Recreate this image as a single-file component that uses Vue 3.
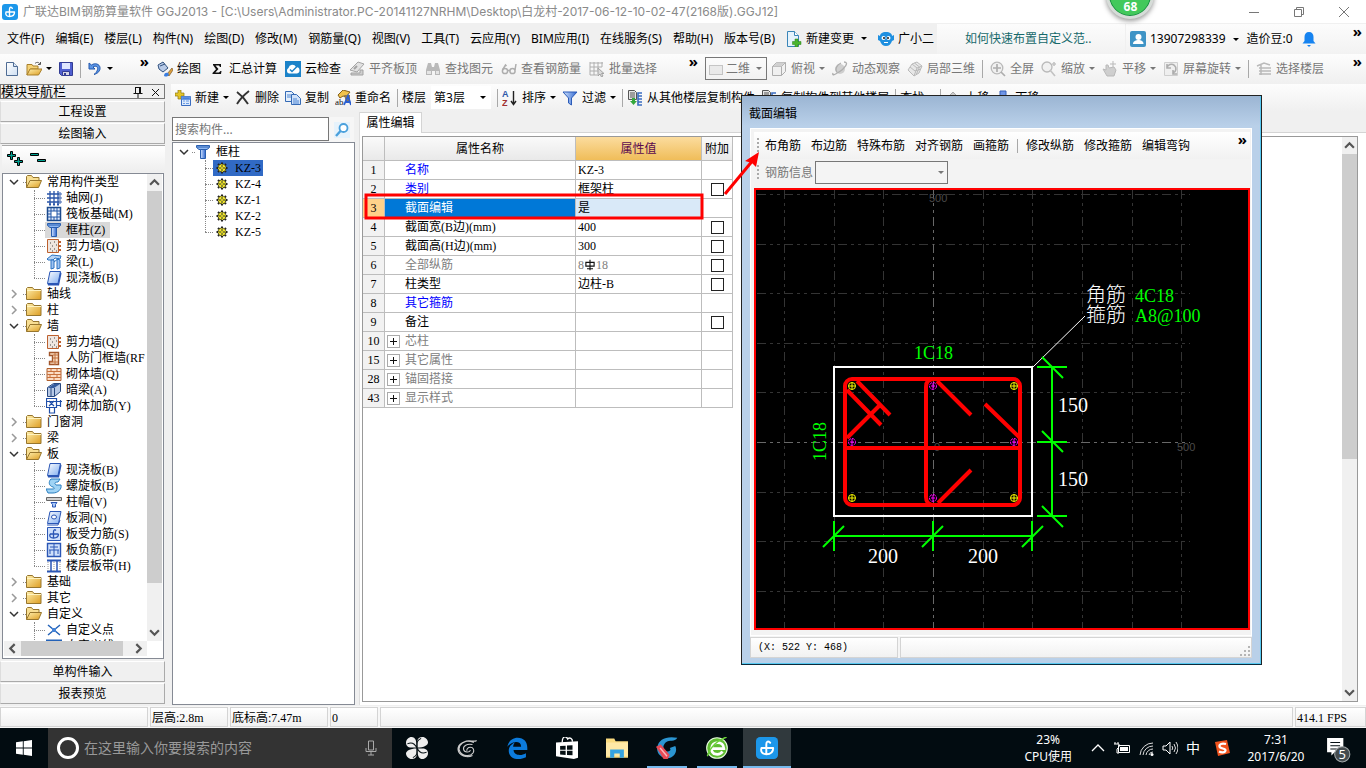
<script setup>
import { h } from 'vue'

const icons = {
  app: '<rect width="16" height="16" rx="3" fill="#1c97ea"/><path d="M10.300 4.200C8.500 2.500 7.500 3.500 7.500 5.500V12.500M4 8h8.500M4 8c-1 3 1 4.500 3.500 4.500 3 0 5-1.500 5-4.500" fill="none" stroke="#fff" stroke-width="1.400" stroke-linecap="round"/>',
  doc: '<path d="M2.500 1.500h7l4 4v9h-11z" fill="url(#gPaper)" stroke="#4f6c94"/><path d="M9.500 1.500v4h4" fill="#dce8f6" stroke="#4f6c94"/>',
  open: '<path d="M1 14V3.500h5l1 1.500h5v3H4.500z" fill="#f5d276" stroke="#a9802b"/><path d="M1 14l3-6h12l-3.500 6z" fill="url(#gFold)" stroke="#a9802b"/><path d="M9 2.500c2-2 4-1 5 .5m.5-2v2.500H12" fill="none" stroke="#555"/>',
  save: '<path d="M1.500 1.500h13v13h-11l-2-2z" fill="#4f5fd0" stroke="#323c93"/><path d="M4 2h8v6H4z" fill="#dfe6ff"/><path d="M4.500 10.500h7v4h-7z" fill="#d5d5e5" stroke="#323c93"/><path d="M6 12h2v2H6z" fill="#323c93"/>',
  undo: '<path d="M2 2v6h6L6 6c3-2 6 0 4 4-.5 1.200-1.500 2.400-3 3.500 4-1 6.500-4 6-7C12.500 3 8 1.500 4.500 4z" fill="#5b95e5" stroke="#2559ad"/>',
  paint: '<path d="M1 4l5-3 5 6-5 4-4-3z" fill="#b9cbe8" stroke="#32527f"/><path d="M3 5l5-2" stroke="#32527f"/><path d="M15 7l-5 6 2 2 4-6z" fill="#e0a13c" stroke="#795728" stroke-width=".7"/><path d="M7 15c0-3 2-4 4-3l1 1c-1 3-3 3-5 2z" fill="#3a7de0"/>',
  sigma: '<path d="M4 3h8v3h-1l-1-1.500H6.500L9.500 8l-3.200 3.500H10L11.500 10h1l-.5 3H3.500v-1L7 8.200 4 4z" fill="#111"/>',
  cloud: '<rect width="16" height="16" fill="#1c83c9"/><path d="M4 12.500a3 3 0 0 1-.5-5.500A4 4 0 0 1 11 6a3.300 3.300 0 0 1 1 6.500z" fill="#fff"/><path d="M5 8.500l2 2 5-5" stroke="#1c83c9" stroke-width="1.500" fill="none"/>',
  slab: '<path d="M1 9l8-8 6 2-7 8z" fill="#d7d7d7" stroke="#777"/><path d="M2 14h12V9h-3v3H2z" fill="#bbb" stroke="#777"/><path d="M5 8l3-3" stroke="#777" stroke-width="2"/>',
  bino: '<path d="M1 9l2-7h3l1 4h2l1-4h3l2 7v5h-5v-4H7v4H1z" fill="#999"/><path d="M2 10h4v3H2zm9 0h3v3h-3z" fill="#ddd"/>',
  glasses: '<g fill="none" stroke="#888" stroke-width="1.500"><circle cx="4" cy="10" r="2.600"/><circle cx="11.500" cy="10" r="2.600"/><path d="M6.500 9.500h2.500M1.500 9l3-5 1 1M14 9l1-6"/></g>',
  batch: '<path d="M1 1v13M5 1v13M9 1v8M13 1v5M1 2h13M1 6h12M1 10h8M1 14h7" stroke="#888" fill="none"/><path d="M9 7v8l2-2 1.500 3 1.500-1-1.500-2.500H15z" fill="#ccc" stroke="#777"/>',
  box: '<rect x="1.500" y="4.500" width="13" height="9" fill="#e4e4e4" stroke="#aaa"/>',
  cube: '<path d="M1.500 5.500l4-4h9v9l-4 4h-9z" fill="#eee" stroke="#888"/><path d="M1.500 5.500h9v9M10.500 5.500l4-4" fill="none" stroke="#888"/><path d="M2 5.500l4-4h8l-4 4z" fill="#bbb"/>',
  orbit: '<circle cx="8" cy="8" r="5" fill="#bbb"/><path d="M12 1c6 0 0 7-5 10-5 3-7 4-6 1M9 2c-5 2-6 7-4 9" fill="none" stroke="#888" stroke-width="1.300"/>',
  local3d: '<path d="M1 9l4-6 5-2 5 4-3 7-5 3z" fill="#e0e0e0" stroke="#999"/><path d="M5 3l5 4 5-2M10 7l-3 8M3 6l5 4 6-2M7.500 2l5 4-3 7" fill="none" stroke="#999"/>',
  full: '<circle cx="7" cy="7" r="5.800" fill="#eee" stroke="#999" stroke-width="1.300"/><path d="M7 3v8M3 7h8M11 11l4 4" stroke="#888" stroke-width="1.700"/>',
  zoomi: '<circle cx="6" cy="6" r="5" fill="#eee" stroke="#999" stroke-width="1.300"/><path d="M9 9l5 6M13 1v4M11 3h4" stroke="#aaa" stroke-width="1.700"/>',
  pan: '<path d="M1 8l3 1V4h2l1 3 5-1 2 3-2 6H5z" fill="#bbb" stroke="#999"/><path d="M11 0v6M8 3h6" stroke="#999"/>',
  rotate: '<path d="M1.500 1.500h13v13h-13z" fill="#ececec" stroke="#bbb"/><path d="M4 7a4.500 4.500 0 1 1 6 5M10 9v4h4M4 3v4h4" fill="none" stroke="#888" stroke-width="1.600"/>',
  floors: '<path d="M1 5l7-3 6 2M3 7h12M3 10h12M3 13h12M5 4v10" stroke="#999" stroke-width="1.500" fill="none"/>',
  add: '<path d="M3 0h3v3h3v3H6v3H3V6H0V3h3z" fill="#e4c529" stroke="#8e7612" stroke-width=".7"/><path d="M6.500 6.500h9v9h-9z" fill="#dceafc" stroke="#3a6cc0"/><path d="M7 7h8v2.500H7zM8 11h2M11 11h3M8 13.500h2M11 13.500h3" fill="#4680dc" stroke="#6a9be6"/>',
  del: '<path d="M2 2c4 3 8 7 11 12M14 1C9 5 5 9 2 14" stroke="#333" stroke-width="1.900" fill="none"/>',
  copy: '<path d="M.5 1.500h6l3 3v7h-9z" fill="#e3eefb" stroke="#356ab5"/><path d="M6.500 4.500h5l4 4v6h-9z" fill="#cfe1f9" stroke="#356ab5"/><path d="M2 5h4M2 7h4M8 9h4M8 11h6M8 13h6" stroke="#4f86d3"/>',
  rename: '<path d="M3 5l5-5 7 2-4 5-3-1-3 2z" fill="#f0c24b" stroke="#86611a"/><path d="M9 5h6v7h-4" fill="#8a7a56"/><text x="0" y="15" font-size="9" font-family="Liberation Serif" fill="#111">ab</text><path d="M9 15l4-9 3 9M10.500 12h4" stroke="#2b5fd1" stroke-width="1.800" fill="none"/>',
  sort: '<text x="0" y="7" font-size="9" font-weight="bold" font-family="Liberation Sans" fill="#2d57a8">A</text><text x="0" y="16" font-size="9" font-weight="bold" font-family="Liberation Sans" fill="#a03030">Z</text><path d="M11.500 1v13M9 11l2.500 3.500L14 11" stroke="#222" stroke-width="1.400" fill="none"/>',
  filter: '<path d="M1 2h14L9.500 8v7L6.500 13V8z" fill="url(#gBlue)" stroke="#2b5bb8"/>',
  floorcopy: '<path d="M1.500.5h6l2 2v7h-8z" fill="#e6e6e6" stroke="#555"/><path d="M3 3h5M3 5h5M3 7h5" stroke="#555"/><path d="M5 8v3H3l3.500 4L10 11H8V8z" fill="#35a83c"/><path d="M15 3h-4v12h4M11 6h4M11 9h4M11 12h4" stroke="#3a6cc0" stroke-width="1.600" fill="none"/>',
  up: '<path d="M8 2l6 6h-3v6H5V8H2z" fill="#ccc" stroke="#aaa"/>',
  down: '<path d="M5 1h6v7h3l-6 6-6-6h3z" fill="#6f95e6" stroke="#3760ba"/>',
  change: '<path d="M1.500.5h7l4 4v11h-11z" fill="#e6f3fc" stroke="#3a85b8"/><path d="M8.500.5v4h4" fill="#fff" stroke="#3a85b8"/><path d="M9 8h3v2.500h3v3h-3V16H9v-2.500H6.500v-3H9z" fill="#4ab52e" stroke="#2b7f18" stroke-width=".5"/>',
  robot: '<path d="M8 1c4 0 6 2 6 4l2-1v5l-2 1c-1 3-3 5-6 5s-5-2-6-5L0 9V4l2 1c0-2 2-4 6-4z" fill="#1e8fe0"/><circle cx="5.500" cy="7" r="2" fill="#fff"/><circle cx="10.500" cy="7" r="2" fill="#fff"/><circle cx="6" cy="7" r=".9"/><circle cx="10" cy="7" r=".9"/><path d="M6 11.500h4" stroke="#fff"/>',
  user: '<rect width="16" height="16" rx="2" fill="#3f94c6"/><circle cx="8.500" cy="6" r="3" fill="#fff"/><path d="M3 13c0-3 3-4 5.500-4s5 1 5 4z" fill="#fff"/>',
  bell: '<path d="M8 1c3 0 4.500 2 4.500 5v4l2 2.500h-13l2-2.500V6C3.500 3 5 1 8 1z" fill="#1683f0"/><path d="M6 14h4l-2 2z" fill="#1683f0"/>',
  folder: '<path d="M.5 13.500v-11l1-1h5l1.500 2h7v10z" fill="url(#gFold)" stroke="#97762e"/><path d="M1 4.500h14" stroke="#fff3c0"/>',
  folderOpen: '<path d="M.5 13.500v-11l1-1h4l1.500 2h6v3" fill="#f8df94" stroke="#97762e"/><path d="M.5 13.500l3.500-7h11.500l-3 7z" fill="url(#gFold)" stroke="#97762e"/>',
  axis: '<path d="M1 4h12M1 8h12M1 12h12M4 1v13M8 1v13M12 1v13" stroke="#2a55a8" stroke-width="1.300" fill="none"/><g fill="#fff" stroke="#2a55a8"><circle cx="14" cy="4" r="1.200"/><circle cx="14" cy="8" r="1.200"/><circle cx="14" cy="12" r="1.200"/></g><path d="M3 14.500h2M7 14.500h2M11 14.500h2" stroke="#2a55a8" stroke-width="2"/>',
  raft: '<path d="M1.500 1.500h13v13h-13z" fill="#dfeafc" stroke="#1b4a8c" stroke-width="1.500"/><path d="M5 5h6v6H5z" fill="#fff" stroke="#2257a6"/><path d="M5 2v3M8 2v3M11 2v3M5 11v3M8 11v3M11 11v3M2 5h3M2 8h3M2 11h3M11 5h3M11 8h3M11 11h3" fill="none" stroke="#2257a6"/>',
  column: '<path d="M1.500 1.500h13v2l-2.500 2h-8l-2.500-2z" fill="#8fb9f4" stroke="#285eaf"/><path d="M5.500 5.500h5v9h-5z" fill="url(#gBlue)" stroke="#285eaf"/><path d="M2 3h12" stroke="#285eaf"/>',
  shear: '<path d="M1.500 1.500h11v13h-11z" fill="#eee6e0" stroke="#bd602e"/><path d="M13 4h2M13 8h2M13 12h2" stroke="#bd602e" stroke-width="2"/><path d="M4 5h1M8 4h1M6 8h1M10 7h1M4 11h1M8 11h1M10 13h1M6 13h1" stroke="#444"/>',
  beam: '<path d="M1 5l5-4 9 1-1 3-5-1-2 2H2z" fill="#b8d4f5" stroke="#2b73c2"/><path d="M5 6h3v8l-3 1zM11 5l3 1v8l-3 1zM8 8l5-4" fill="#9ec4f2" stroke="#2b73c2"/>',
  slabBlue: '<path d="M4 1.500h10.500l-2.500 12h-10.500z" fill="url(#gPale)" stroke="#2a56b5"/><path d="M1.500 13.500h10.500l2.500-12 1 2-2.500 12h-11z" fill="#2a56b5"/>',
  door: '<path d="M3.500 2.500h9v12h-9v-3h3v-6h-3z" fill="#fde0c4" stroke="#a2562b" stroke-width="1.400"/><path d="M7 5h5M7 8h5M4 12h8M9 3v12" stroke="#c07040"/>',
  brick: '<path d="M1 2.500h14v12H1z" fill="#fbdcc5" stroke="#b0602f"/><path d="M1 5.500h14M1 8.500h14M1 11.500h14M5 3v3M11 3v3M8 6v3M4 9v3M11 9v3M8 12v3" stroke="#c8713d"/>',
  hidden: '<path d="M1.500 5.500l6-4h7v8l-6 5h-7z" fill="#b7c9e6" stroke="#26477f"/><path d="M2 6h6l6-4H8z" fill="#345b9e"/><path d="M8.500 6v8M5 6v8" stroke="#26477f"/>',
  rebarWall: '<path d="M.5.500h10v9H.5zM0 3.500h16M10 7.500h4M14.500 2v7M3.500 9v6h5V9M3 3l5 5M8 3L3 8" fill="none" stroke="#1f4ea8" stroke-width="1.200"/>',
  spiral: '<path d="M5 1h9l-2 3c-3 0-4 1-2 3h5c1 4-3 8-8 8H2l-2-4h6c3 0 3-1 1-2-4-1-5-5-2-8z" fill="#9fd3f5" stroke="#2a7fc0"/>',
  cap: '<path d="M.5 3.500h15v3H.5z" fill="#d0d0d0" stroke="#666"/><path d="M5 8.500h6l-1.500 2v2.500h-3v-2.500z" fill="#a9c8f7" stroke="#2a56b5"/>',
  hole: '<path d="M4 1.500h11l-2.500 12h-11z" fill="url(#gPale)" stroke="#2a56b5"/><ellipse cx="8" cy="7" rx="2.500" ry="2" fill="#fff" stroke="#2a56b5"/><path d="M1 15h11l2-5" stroke="#2a56b5" fill="none"/>',
  force: '<path d="M1.500 1.500h13v13h-13z" fill="#cfe0fb" stroke="#2a56b5"/><path d="M10 4.500C8.500 3 7.500 4 7.500 6v6M4 8h8.500M4 8c-1 3 1 4 3.500 4s5-1 5-4" stroke="#2a56b5" stroke-width="1.300" fill="none"/>',
  negative: '<path d="M1.500 1.500h13v13h-13z" fill="#cfe0fb" stroke="#2a56b5" stroke-width="1.400"/><path d="M8 2v12M4 5h8M3 8h10M4 8v4M12 8v4" stroke="#2a56b5" fill="none"/>',
  band: '<path d="M1 2.500h14M1 13.500h14" stroke="#2a56b5" stroke-width="2"/><path d="M5 3v10M11 3v10" stroke="#2a56b5" stroke-width="1.500"/><path d="M2 4v9M8 4v9M14 4v9" stroke="#999" stroke-dasharray="1 1"/>',
  point: '<path d="M2 3l12 10M14 3L2 13" stroke="#2362b8" stroke-width="1.500"/><path d="M6 6h4v4H6z" fill="#4583d6"/>',
  line: '<path d="M1 2.500h14v12H1z" fill="#cfe0fb" stroke="#2362b8" stroke-width="2"/>',
  gear: '<path d="M8 2.500v11M2.500 8h11M4 4l8 8M12 4l-8 8" stroke="#222" stroke-width="2"/><circle cx="8" cy="8" r="4" fill="#f2e829" stroke="#222" stroke-dasharray="2 1"/><path d="M8 5v6M5 8h6" stroke="#333"/><circle cx="8" cy="8" r="1" fill="#f2e829"/>',
  search: '<rect width="16" height="16" fill="#e6f2fb"/><circle cx="9.500" cy="6" r="4" fill="#fff" stroke="#4aa0dc" stroke-width="1.800"/><path d="M6.500 9L2 14" stroke="#4aa0dc" stroke-width="2.400"/>',
  expand: '<path d="M3.500.5h2v3h3v2h-3v3h-2v-3h-3v-2h3zM10.500 6.500h2v3h3v2h-3v3h-2v-3h-3v-2h3z" fill="#00a090" stroke="#000"/>',
  collapse: '<path d="M.5 2.500h8v2h-8zM7.500 8.500h8v2h-8z" fill="#00a090" stroke="#000"/>',
  rebar: '<path d="M8 1v14M2.500 4.500h11v5h-11zM4 13h8" fill="none" stroke="#111" stroke-width="1.500"/>',
  win: '<path d="M0 2.300l6.800-1v6.200H0zM7.700 1.200L16 0v7.500H7.700zM0 8.400h6.800v6.300L0 13.700zM7.700 8.400H16V16l-8.300-1.200z" fill="#fff"/>',
  mic: '<path d="M5.500 1h5v9h-5zM3 8v3.500h10V8M8 12v3M5 15h6" fill="none" stroke="#aaa"/>',
  pinwheel: '<g fill="#eee"><path d="M7.700 7.700H4C1 7.700 0 6 0 4s2-4 4-4c3 0 3.700 3 3.700 7.700z"/><path d="M8.300 7.700V3c0-2 1.700-3 3.700-3s4 2 4 4-3 3.700-7.700 3.700z"/><path d="M8.300 8.300H12c3 0 4 1.700 4 3.700s-2 4-4 4c-3 0-3.700-3-3.700-7.700z"/><path d="M7.700 8.300V13c0 2-1.700 3-3.700 3s-4-2-4-4 3-3.700 7.700-3.700z"/></g><path d="M1 5c2-1 5-1 7 3 0-3-1-5 3-7M15 11c-2 1-5 1-7-3 0 3 1 5-3 7" stroke="#061014" fill="none" stroke-width=".8"/>',
  swirl: '<path d="M15 2.500c-2 1.500-4.500-.5-7.500.5C3 4.500 1 8 3 11s7.500 3.500 9.500.5c1-2 0-4-2-4-2 0-3 1.500-2.500 2.500M13 4C6.500 1.500 1 5 1.500 9.500c.5 4 6.500 6 10.500 4M12 5.500C8 4.500 5 6.500 5.500 9c.5 2.500 4.500 2.500 5 .5" fill="none" stroke="#ccc" stroke-width=".8"/>',
  edge: '<path d="M1 7C2 2.500 5 .5 8.500.5c4.500 0 7 3 7 7.500v1.500H5.500c.2 4 5.500 4.500 9 2.300v3C9 17.500 2 16 2 10c0-3 2-5 4.500-6-1 1-1.200 2.200-1.300 3H11c0-4.500-6.500-4.300-10 0z" fill="#0c7bdc"/>',
  store: '<path d="M0 4l16-1v12l-3 1L0 14z" fill="#fff"/><path d="M4.500 4c0-5 3-5 4-2.500C10 0 12 1 12 3.500" stroke="#fff" fill="none"/><path d="M3 6.500l4-.2v3H3zM8 6.200l4-.2v3.200H8zM3 10h4v3l-4-.2zM8 10h4v3.300L8 13z" fill="#061014"/>',
  explorer: '<path d="M0 1h6l1 2h9v12H0z" fill="#fbdc80"/><path d="M0 4h16v10H0z" fill="#ffe9a6"/><path d="M3 15V9h10v6h-3v-3H6v3z" fill="#36a3e0"/>',
  gblue: '<path d="M15.500.5C13.500 4 10 1.500 7 4c-3 3-1.500 6.500 1.500 6.500 2 0 2.500-1.500 1.500-2.500l4-1.500c2 4-1 9-5.500 9C3 15.500 0 11 1 7 2 2 7-1 15.500.5z" fill="#2b95d1"/><path d="M0 7l3.500-1.500L10 13l-1.500 3-3 0z" fill="#e84a55"/><path d="M3 8l5 6" stroke="#f9b8bd"/>',
  ebrowser: '<circle cx="8" cy="8" r="7.500" fill="#5fbd32" stroke="#e9ffe0" stroke-width=".8"/><path d="M4 8.500h9c0-6-9-6-9 0 0 5 6 5 8 2" fill="none" stroke="#fff" stroke-width="2"/><path d="M1 14C3 7 9 2 15 0" stroke="#6ad238" fill="none"/>',
  chevUp: '<path d="M2 11l6-6 6 6" fill="none" stroke="#fff" stroke-width="1.300"/>',
  battery: '<path d="M4.500 5.500h11v7h-11z" fill="none" stroke="#fff"/><path d="M6 7h8v4H6z" fill="#fff"/><path d="M1 2v2M4 2v2M0 4h5v3L3 9v4h2" stroke="#fff" fill="none"/>',
  wifi: '<g fill="none" stroke="#ddd"><path d="M2 15A13 13 0 0 1 15 3M5 15A10 10 0 0 1 15 6M8 15a7 7 0 0 1 7-6M11 15a4 4 0 0 1 4-3"/></g><circle cx="14" cy="14.500" r="1.500" fill="#fff"/>',
  volume: '<path d="M1 6h3l4-4v12l-4-4H1z" fill="none" stroke="#fff"/><path d="M10 6q1.500 2 0 4M12 4q3 4 0 8M14 2q4 6 0 12" fill="none" stroke="#ddd"/>',
  sogou: '<path d="M1 2l12-2 3 13-12 3z" fill="#f0531d"/><path d="M12 4C8 3 5 4 5.500 6.500S12 8 11.500 10.500 7 12.500 5 11.500" stroke="#fff" stroke-width="2.200" fill="none"/>'
}
const Ic = (p) => h('svg', { viewBox: '0 0 16 16', class: 'ic', 'aria-hidden': 'true', innerHTML: icons[p.n] })
Ic.props = ['n']

const menus = ['文件(F)', '编辑(E)', '楼层(L)', '构件(N)', '绘图(D)', '修改(M)', '钢筋量(Q)', '视图(V)', '工具(T)', '云应用(Y)', 'BIM应用(I)', '在线服务(S)', '帮助(H)', '版本号(B)']
const drawTools = [
  { i: 'paint', t: '绘图' }, { i: 'sigma', t: '汇总计算' }, { i: 'cloud', t: '云检查' },
  { i: 'slab', t: '平齐板顶', off: true }, { i: 'bino', t: '查找图元', off: true },
  { i: 'glasses', t: '查看钢筋量', off: true }, { i: 'batch', t: '批量选择', off: true }
]
const viewTools = [
  { i: 'cube', t: '俯视', a: true }, { i: 'orbit', t: '动态观察' }, { i: 'local3d', t: '局部三维' }, { sep: true },
  { i: 'full', t: '全屏' }, { i: 'zoomi', t: '缩放', a: true }, { i: 'pan', t: '平移', a: true },
  { i: 'rotate', t: '屏幕旋转', a: true }, { sep: true }, { i: 'floors', t: '选择楼层' }
]
const editTools = [{ i: 'add', t: '新建', a: true }, { i: 'del', t: '删除' }, { i: 'copy', t: '复制' }, { i: 'rename', t: '重命名' }]
const listTools = [
  { sep: true }, { i: 'sort', t: '排序', a: true }, { i: 'filter', t: '过滤', a: true }, { sep: true },
  { i: 'floorcopy', t: '从其他楼层复制构件' }, { i: 'floorcopy', t: '复制构件到其他楼层' }, { sep: true },
  { t: '查找', a: true }, { sep: true }, { i: 'up', t: '上移' }, { i: 'down', t: '下移' }
]

const tree = [
  { t: '常用构件类型', c: [['axis', '轴网(J)'], ['raft', '筏板基础(M)'], ['column', '框柱(Z)', true], ['shear', '剪力墙(Q)'], ['beam', '梁(L)'], ['slabBlue', '现浇板(B)']] },
  { t: '轴线' }, { t: '柱' },
  { t: '墙', c: [['shear', '剪力墙(Q)'], ['door', '人防门框墙(RF'], ['brick', '砌体墙(Q)'], ['hidden', '暗梁(A)'], ['rebarWall', '砌体加筋(Y)']] },
  { t: '门窗洞' }, { t: '梁' },
  { t: '板', c: [['slabBlue', '现浇板(B)'], ['spiral', '螺旋板(B)'], ['cap', '柱帽(V)'], ['hole', '板洞(N)'], ['force', '板受力筋(S)'], ['negative', '板负筋(F)'], ['band', '楼层板带(H)']] },
  { t: '基础' }, { t: '其它' },
  { t: '自定义', c: [['point', '自定义点'], ['line', '自定义线(X)']] }
]
const members = ['KZ-3', 'KZ-4', 'KZ-1', 'KZ-2', 'KZ-5']

const rows = [
  { n: 1, t: '名称', v: 'KZ-3', k: 'blue' },
  { n: 2, t: '类别', v: '框架柱', k: 'blue', c: true },
  { n: 3, t: '截面编辑', v: '是', k: 'sel' },
  { n: 4, t: '截面宽(B边)(mm)', v: '400', c: true },
  { n: 5, t: '截面高(H边)(mm)', v: '300', c: true },
  { n: 6, t: '全部纵筋', v: '8|18', k: 'grey', c: true },
  { n: 7, t: '柱类型', v: '边柱-B', c: true },
  { n: 8, t: '其它箍筋', v: '', k: 'blue' },
  { n: 9, t: '备注', v: '', c: true },
  { n: 10, t: '芯柱', v: '', k: 'grey', p: true },
  { n: 15, t: '其它属性', v: '', k: 'grey', p: true },
  { n: 28, t: '锚固搭接', v: '', k: 'grey', p: true },
  { n: 43, t: '显示样式', v: '', k: 'grey', p: true }
]

const gridX = [784, 834, 883, 983, 1032, 1082, 1132, 1181]
const gridY = [194, 244, 293, 343, 392, 492, 541, 591]
const cornerBars = [[852, 386], [1014, 386], [852, 498], [1014, 498]]
const sideBars = [[933, 386], [852, 442], [1014, 442], [933, 498]]
const taskIcons = ['pinwheel', 'swirl', 'edge', 'store', 'explorer', 'gblue', 'ebrowser', 'app']
</script>

<template>
  <div class="page">
    <svg class="defs" aria-hidden="true">
      <defs>
        <linearGradient id="gPaper" x2="1" y2="1"><stop stop-color="#fff" /><stop offset="1" stop-color="#cfdff2" /></linearGradient>
        <linearGradient id="gFold" x2="1" y2="1"><stop stop-color="#fff0ae" /><stop offset="1" stop-color="#dd9d22" /></linearGradient>
        <linearGradient id="gBlue" x2="1"><stop stop-color="#d4e6ff" /><stop offset="1" stop-color="#2d65cf" /></linearGradient>
        <linearGradient id="gPale" x2="1" y2="1"><stop stop-color="#fff" /><stop offset="1" stop-color="#7fadf0" /></linearGradient>
      </defs>
    </svg>

    <header class="title">
      <Ic n="app" />
      <span class="title-text">广联达BIM钢筋算量软件 GGJ2013 - [C:\Users\Administrator.PC-20141127NRHM\Desktop\白龙村-2017-06-12-10-02-47(2168版).GGJ12]</span>
      <div class="winbtns">
        <button aria-label="最小化"><svg viewBox="0 0 12 12"><path d="M1 6.500h10" /></svg></button>
        <button aria-label="还原"><svg viewBox="0 0 12 12"><path d="M1.500 3.500h7v7h-7zM3.500 3.500v-2h7v7h-2" /></svg></button>
        <button aria-label="关闭"><svg viewBox="0 0 12 12"><path d="M1 1l10 10M11 1L1 11" /></svg></button>
      </div>
      <div class="ball">68</div>
    </header>

    <nav class="menubar">
      <div class="menus">
        <button v-for="m in menus" :key="m">{{ m }}</button>
        <button class="tb"><Ic n="change" />新建变更<i class="arr"></i></button>
        <button class="tb"><Ic n="robot" />广小二</button>
      </div>
      <a class="ticker" href="#">如何快速布置自定义范..</a>
      <div class="account">
        <button class="tb"><Ic n="user" />13907298339<i class="arr"></i></button>
        <span>造价豆:0</span>
        <button aria-label="通知" class="tb"><Ic n="bell" /></button>
        <span class="more">»</span>
      </div>
    </nav>

    <div class="bar top-tools">
      <div class="group files">
        <button class="tb" aria-label="新建"><Ic n="doc" /></button>
        <button class="tb" aria-label="打开"><Ic n="open" /><i class="arr"></i></button>
        <button class="tb" aria-label="保存"><Ic n="save" /></button>
        <i class="sep"></i>
        <button class="tb" aria-label="撤销"><Ic n="undo" /><i class="arr"></i></button>
        <span class="more">»</span>
      </div>
      <div class="group draw">
        <button v-for="b in drawTools" :key="b.t" class="tb" :class="{ off: b.off }"><Ic :n="b.i" />{{ b.t }}</button>
        <span class="more">»</span>
      </div>
      <div class="group view">
        <div class="combo2d off"><Ic n="box" /><select aria-label="视图模式"><option>二维</option></select><i class="arr"></i></div>
        <template v-for="(b, k) in viewTools" :key="k">
          <i v-if="b.sep" class="sep"></i>
          <button v-else class="tb off"><Ic :n="b.i" />{{ b.t }}<i v-if="b.a" class="arr"></i></button>
        </template>
        <span class="more">»</span>
      </div>
    </div>

    <main class="main">
      <aside class="nav">
        <div class="nav-title"><span>模块导航栏</span>
          <svg viewBox="0 0 30 12"><path d="M3.500 1v6M8.500 1v6M3 1.500h6M7.500 1v6M1.500 7.500h9M6 8v4" /><path d="M20 3l7 7M27 3l-7 7" /></svg>
        </div>
        <button class="nav-btn">工程设置</button>
        <button class="nav-btn">绘图输入</button>
        <div class="nav-tools">
          <button class="tb" aria-label="全部展开"><Ic n="expand" /></button>
          <button class="tb" aria-label="全部折叠"><Ic n="collapse" /></button>
        </div>
        <div class="tree-box">
          <div class="tree-mid">
            <ul class="tree">
              <li v-for="g in tree" :key="g.t">
                <button class="root">
                  <svg class="chev" :class="{ shut: !g.c }" viewBox="0 0 10 10"><path :d="g.c ? 'M1 3l4 4 4-4' : 'M3 1l4 4-4 4'" /></svg>
                  <i class="dots"></i><Ic :n="g.c ? 'folderOpen' : 'folder'" /><span>{{ g.t }}</span>
                </button>
                <ul v-if="g.c" class="kids">
                  <li v-for="c in g.c" :key="c[1]"><i class="dots"></i><button :class="{ on: c[2] }"><Ic :n="c[0]" /><span>{{ c[1] }}</span></button></li>
                </ul>
              </li>
            </ul>
            <div class="vscroll"><svg viewBox="0 0 10 10"><path d="M1 7l4-4 4 4" /></svg><i class="thumb"></i><svg viewBox="0 0 10 10"><path d="M1 3l4 4 4-4" /></svg></div>
          </div>
          <div class="hscroll"><svg viewBox="0 0 10 10"><path d="M7 1L3 5l4 4" /></svg><i class="thumb"></i><svg viewBox="0 0 10 10"><path d="M3 1l4 4-4 4" /></svg></div>
        </div>
        <button class="nav-btn">单构件输入</button>
        <button class="nav-btn">报表预览</button>
      </aside>

      <section class="work">
        <div class="bar edit-tools">
          <button v-for="b in editTools" :key="b.t" class="tb"><Ic :n="b.i" />{{ b.t }}<i v-if="b.a" class="arr"></i></button>
          <i class="sep"></i>
          <label class="floor">楼层<span class="floor-box"><select><option>第3层</option></select><i class="arr"></i></span></label>
          <template v-for="(b, k) in listTools" :key="k">
            <i v-if="b.sep" class="sep"></i>
            <button v-else class="tb"><Ic v-if="b.i" :n="b.i" />{{ b.t }}<i v-if="b.a" class="arr"></i></button>
          </template>
        </div>
        <div class="panes">
          <div class="members">
            <div class="search"><input type="text" placeholder="搜索构件..." aria-label="搜索构件" /><button aria-label="搜索"><Ic n="search" /></button></div>
            <ul class="tree member-tree">
              <li>
                <button class="root">
                  <svg class="chev" viewBox="0 0 10 10"><path d="M1 3l4 4 4-4" /></svg><i class="dots"></i><Ic n="column" /><span>框柱</span>
                </button>
                <ul class="kids">
                  <li v-for="(m, k) in members" :key="m"><i class="dots"></i><button :class="{ picked: k === 0 }"><Ic n="gear" /><span>{{ m }}</span></button></li>
                </ul>
              </li>
            </ul>
          </div>
          <div class="props">
            <div class="tabs"><button>属性编辑</button></div>
            <div class="prop-body">
              <div class="prop-area">
                <table>
                  <colgroup><col class="c1" /><col class="c2" /><col class="c3" /><col class="c4" /></colgroup>
                  <thead><tr><th></th><th>属性名称</th><th class="hot">属性值</th><th>附加</th></tr></thead>
                  <tbody>
                    <tr v-for="r in rows" :key="r.n" :class="r.k">
                      <th>{{ r.n }}</th>
                      <td class="name"><div><button v-if="r.p" class="plus" :aria-label="'展开' + r.t"></button><span>{{ r.t }}</span></div></td>
                      <td class="val"><template v-if="r.n === 6">8<Ic n="rebar" />18</template><template v-else>{{ r.v }}</template></td>
                      <td class="chk"><input v-if="r.c" type="checkbox" :aria-label="r.t + '附加'" /></td>
                    </tr>
                  </tbody>
                </table>
              </div>
              <div class="vscroll main-scroll"><svg viewBox="0 0 10 10"><path d="M1 7l4-4 4 4" /></svg><i class="thumb"></i><svg viewBox="0 0 10 10"><path d="M1 3l4 4 4-4" /></svg></div>
            </div>
          </div>
        </div>
      </section>
    </main>

    <footer class="status">
      <span class="s1"></span><span class="s2">层高:2.8m</span><span class="s3">底标高:7.47m</span><span class="s4">0</span><span class="s5"></span><span class="s6">414.1 FPS</span>
    </footer>

    <div class="taskbar">
      <button class="start" aria-label="开始"><Ic n="win" /></button>
      <div class="cortana"><i class="ring"></i><input type="text" placeholder="在这里输入你要搜索的内容" aria-label="搜索" /><Ic n="mic" /></div>
      <div class="apps">
        <button v-for="(t, k) in taskIcons" :key="t" :class="{ run: k > 4, act: k === 7 }" :aria-label="t"><Ic :n="t" /></button>
      </div>
      <div class="tray">
        <div class="two">23%<br />CPU使用</div>
        <div class="trayicons"><Ic n="chevUp" /><Ic n="battery" /><Ic n="wifi" /><Ic n="volume" /><span>中</span><Ic n="sogou" /></div>
        <div class="two clock">7:31<br />2017/6/20</div>
        <svg class="note" viewBox="0 0 24 24"><path d="M1 1h15v13H8l-3 3v-3H1z" fill="#fff" /><path d="M4 5h9M4 8h9M4 11h6" stroke="#061014" /><circle cx="15" cy="16" r="7" fill="#444b4e" stroke="#a2a7a9" /><text x="15" y="20" text-anchor="middle" fill="#fff" font-size="12">5</text></svg>
      </div>
    </div>

    <section class="dialog">
      <h2>截面编辑</h2>
      <div class="dlg-body">
        <div class="dlg-tools">
          <i class="grip"></i>
          <button>布角筋</button><button>布边筋</button><button>特殊布筋</button><button>对齐钢筋</button><button>画箍筋</button>
          <i class="sep"></i>
          <button>修改纵筋</button><button>修改箍筋</button><button>编辑弯钩</button>
          <span class="more">»</span>
        </div>
        <div class="dlg-tools second">
          <i class="grip"></i>
          <label class="info">钢筋信息<span class="info-box"><select><option></option></select><i class="arr"></i></span></label>
        </div>
        <div class="canvas">
          <svg viewBox="756 190 492 438" preserveAspectRatio="xMidYMid meet">
            <g stroke="#343434" stroke-dasharray="9 4 3 4 3 4" shape-rendering="crispEdges">
              <path v-for="x in gridX" :key="'x' + x" :d="`M${x} 190V628`" />
              <path v-for="y in gridY" :key="'y' + y" :d="`M757 ${y}H1190`" />
              <path d="M933 190V628M757 442H1190" stroke="#686868" />
            </g>
            <g fill="#4a4a4a" font-size="11" font-family="Liberation Sans"><text x="929" y="202">500</text><text x="934" y="451">0</text><text x="1177" y="451">500</text></g>
            <rect x="834" y="367" width="198" height="149" fill="none" stroke="#fff" stroke-width="2" />
            <path d="M1033 367L1085 316" stroke="#fff" />
            <g fill="none" stroke="#f00" stroke-width="4">
              <rect x="845" y="379" width="175" height="126" rx="7" />
              <path d="M934 379q-8 0-8 8v110q0 8 8 8M846 448H1020" />
              <path d="M857 381L890 415M847 390L881 425M847 438L880 405M937 381L971 415M985 404L1020 438M938 503L971 470" />
            </g>
            <g fill="none" stroke="#ff0"><g v-for="(p, k) in cornerBars" :key="k"><circle :cx="p[0]" :cy="p[1]" r="3.500" /><path :d="`M${p[0] - 3} ${p[1]}h6m-3-3v6`" /></g></g>
            <g fill="none" stroke="#f0f"><g v-for="(p, k) in sideBars" :key="k"><circle :cx="p[0]" :cy="p[1]" r="3.500" stroke-dasharray="3 1" /><path :d="`M${p[0] - 2} ${p[1]}h4m-2-3v6`" /></g></g>
            <g fill="none" stroke="#0f0" stroke-width="2">
              <path d="M1052 367V516M1037 367h30M1037 442h30M1037 516h30M1042 357l21 21M1042 431l21 21M1042 506l21 21" />
              <path d="M834 536H1032M834 521v30M933 521v30M1032 521v30M823 547l21-21M922 547l21-21M1022 547l21-21" />
            </g>
            <g class="cad" fill="#fff"><text x="1058" y="412">150</text><text x="1058" y="486">150</text><text x="868" y="563">200</text><text x="968" y="563">200</text><text x="1086" y="302">角筋</text><text x="1086" y="322">箍筋</text></g>
            <g class="cad small" fill="#0f0"><text x="914" y="359">1C18</text><text x="1135" y="302">4C18</text><text x="1135" y="322">A8@100</text><text transform="translate(826 461) rotate(-90)">1C18</text></g>
          </svg>
        </div>
      </div>
      <div class="dlg-status"><span class="pos">(X: 522 Y: 468)</span><span class="rest"><svg viewBox="0 0 12 12"><path d="M9 1h2v2H9zM5 5h2v2H5zM9 5h2v2H9zM1 9h2v2H1zM5 9h2v2H5zM9 9h2v2H9z" /></svg></span></div>
    </section>

    <svg class="marks" viewBox="0 0 400 80" aria-hidden="true">
      <rect x="2" y="46" width="336" height="23" fill="none" stroke="#f00" stroke-width="3" />
      <path d="M361 45L390 10" stroke="#f00" stroke-width="3" />
      <path d="M395 3l-3 15-4-4-7-2z" fill="#f00" />
    </svg>
  </div>
</template>

<style>
html, body { margin: 0; height: 100%; overflow: hidden; }
</style>

<style scoped>
.page { position: relative; height: 100vh; display: flex; flex-direction: column; background: #f0f0f0; color: #000; font: 12px/16px "Noto Sans", "Noto Sans CJK SC", sans-serif; overflow: hidden; }
.page * { box-sizing: border-box; }
.defs { position: absolute; width: 0; height: 0; }
button, input, select { font: inherit; color: inherit; border: 0; background: none; padding: 0; margin: 0; white-space: nowrap; }
ul { list-style: none; margin: 0; padding: 0; }
.ic { width: 16px; height: 16px; flex: none; display: block; }
.arr { flex: none; width: 0; height: 0; border: 3px solid transparent; border-top-color: currentColor; border-bottom: 0; }
.sep { flex: none; width: 1px; height: 18px; background: #a8a8a8; }
.more { margin-left: auto; align-self: flex-start; font: bold 15px/14px "Noto Sans", sans-serif; }
.tb { display: flex; align-items: center; gap: 4px; flex: none; }

.title { position: relative; flex: none; height: 23px; background: #fff; display: flex; align-items: center; gap: 5px; padding-left: 2px; color: #8a8a8a; }
.title-text { flex: 1; white-space: nowrap; font-family: Inter, "Noto Sans CJK SC", sans-serif; }
.winbtns { display: flex; }
.winbtns button { width: 45px; height: 20px; }
.winbtns svg { width: 12px; height: 12px; display: block; margin: auto; fill: none; stroke: #777; }
.ball { position: absolute; left: 81%; top: -29px; width: 48px; height: 48px; border-radius: 50%; background: #42c95b; border: 3px solid #d6dcd8; box-shadow: inset 0 0 0 1px #178a42, 0 2px 5px #999; color: #fff; font-weight: bold; line-height: 14px; padding-top: 26px; text-align: center; z-index: 3; }

.menubar { flex: none; height: 31px; display: flex; align-items: stretch; }
.menus { flex: 1; display: flex; align-items: center; gap: 11px; padding-left: 7px; white-space: nowrap; overflow: hidden; }
.menus .arr, .account .arr { margin-left: 3px; }
.ticker { flex: none; width: 188px; line-height: 30px; margin-top: 1px; padding-left: 28px; color: #17696b; text-decoration: none; background: linear-gradient(#fcfcfc, #f2f2f2); white-space: nowrap; }
.account { flex: none; width: 240px; margin: 1px 0 0 1px; display: flex; align-items: center; gap: 8px; padding: 0 4px; background: linear-gradient(#fcfcfc, #f2f2f2); }

.bar { background: linear-gradient(#fdfdfd, #f0f0f0); display: flex; align-items: center; }
.top-tools { flex: none; height: 29px; margin-bottom: 1px; }
.group { display: flex; align-items: center; height: 100%; gap: 8px; padding: 0 4px; }
.files { width: 153px; gap: 6px; }
.draw { width: 549px; }
.view { flex: 1; padding: 0 4px 0 3px; gap: 7px; }
.off { color: #777; }
.off .ic { opacity: .65; filter: grayscale(1); }
.combo2d { width: 62px; height: 23px; border: 1px solid #777; display: flex; align-items: center; gap: 2px; padding: 0 4px 0 2px; margin-right: -3px; }
select { appearance: none; flex: 1; min-width: 0; outline: 0; }

.main { flex: 1; min-height: 0; display: flex; gap: 6px; padding-bottom: 1px; }
.nav { flex: none; width: 165px; display: flex; flex-direction: column; gap: 1px; padding-bottom: 1px; }
.nav-title { height: 15px; border: 1px solid #777; display: flex; justify-content: space-between; align-items: center; font-size: 13px; line-height: 13px; margin-bottom: 1px; white-space: nowrap; }
.nav-title svg { width: 30px; height: 12px; fill: none; stroke: #111; margin-right: 2px; }
.nav-btn { flex: none; height: 21px; border: 1px solid #aaa; border-top-color: #fff; border-left-color: #ddd; line-height: 20px; }
.nav-tools { flex: none; height: 27px; margin-left: 2px; background: linear-gradient(#fff, #eee); display: flex; align-items: center; gap: 7px; padding-left: 5px; border-top: 1px solid #aaa; }
.tree-box { flex: 1; min-height: 0; display: flex; flex-direction: column; margin: 0 1px 1px 2px; border: 1px solid #858a94; background: #fff; padding: 0 1px 2px; }
.tree-mid { flex: 1; min-height: 0; display: flex; }
.tree { flex: 1; min-width: 0; overflow: hidden; font-family: "Liberation Serif", "Noto Sans CJK SC", serif; background: #fff; }
.tree button { display: flex; align-items: center; height: 16px; line-height: 16px; text-align: left; }
.root .chev { width: 10px; height: 10px; margin: 0 4px 0 5px; flex: none; fill: none; stroke: #333; stroke-width: 1.500; }
.root .chev.shut { stroke: #999; }
.root .dots { width: 3px; }
.root .ic { margin-right: 5px; }
.dots { flex: none; height: 0; border-top: 1px dotted #888; }
.kids { margin-left: 30px; position: relative; }
.kids::before { content: ""; position: absolute; top: 0; bottom: 8px; left: 0; border-left: 1px dotted #888; }
.kids li { display: flex; align-items: center; height: 16px; white-space: nowrap; }
.kids .dots { width: 11px; }
.kids button { gap: 4px; padding: 0 5px 0 1px; }
.on { background: #d9d9d9; }
.vscroll { flex: none; width: 15px; background: #f0f0f0; display: flex; flex-direction: column; align-items: center; }
.vscroll svg, .hscroll svg { flex: none; width: 11px; height: 11px; margin: 3px; fill: none; stroke: #555; stroke-width: 2; }
.vscroll .thumb { width: 15px; height: 84%; background: #cdcdcd; }
.vscroll svg:last-child { margin-top: auto; }
.hscroll { flex: none; height: 15px; margin-right: 15px; background: #f0f0f0; display: flex; align-items: center; }
.hscroll .thumb { width: 102px; height: 15px; background: #cdcdcd; }
.hscroll svg:last-child { margin-left: auto; }

.work { flex: 1; min-width: 0; display: flex; flex-direction: column; }
.edit-tools { flex: none; height: 27px; padding-left: 4px; gap: 6px; overflow: hidden; }
.floor { display: flex; align-items: center; gap: 5px; }
.floor-box { display: flex; align-items: center; width: 60px; height: 23px; background: #fff; padding: 0 5px 0 3px; }
.edit-tools .sep { margin: 0 -2px 0 0; }
.panes { flex: 1; min-height: 0; display: flex; gap: 4px; }
.members { flex: none; width: 184px; display: flex; flex-direction: column; margin-top: 6px; padding-left: 1px; }
.search { display: flex; height: 25px; flex: none; }
.search input { width: 157px; height: 24px; border: 1px solid #777; background: #fff; padding-left: 2px; }
.search input::placeholder { color: #777; opacity: 1; }
.search button { width: 25px; padding-left: 5px; background: #f6f6f6; }
.member-tree { border: 1px solid #858a94; padding-top: 1px; }
.member-tree .root .chev { margin: 0 3px 0 6px; }
.member-tree .kids { margin-left: 32px; }
.member-tree .kids button { gap: 5px; padding: 0 2px 0 1px; }
.member-tree .kids .dots { width: 8px; }
.kids .picked { background: #316ac5; }

.props { flex: 1; min-width: 0; display: flex; flex-direction: column; margin-top: 1px; border-left: 1px solid #ddd; background: #fff; }
.tabs { height: 21px; flex: none; background: #f0f0f0; border-bottom: 1px solid #d4d4d4; }
.tabs button { width: 62px; height: 21px; background: #fff; border: 1px solid #d4d4d4; border-bottom: 0; border-left: 0; }
.prop-body { flex: 1; min-height: 0; display: flex; margin: 3px 8px 3px 2px; border: 1px solid #999; }
.prop-area { flex: 1; min-width: 0; overflow: hidden; }
.main-scroll .thumb { height: 54%; }
table { border-collapse: separate; border-spacing: 0; table-layout: fixed; width: 370px; font-family: "Liberation Serif", "Noto Sans CJK SC", serif; line-height: 16px; }
.c1 { width: 22px; } .c2 { width: 191px; } .c3 { width: 126px; } .c4 { width: 31px; }
th, td { height: 19px; padding: 0; border: solid #bdbdbd; border-width: 0 1px 1px 0; font-weight: normal; white-space: nowrap; text-align: left; }
th { background: #f2f2f2; text-align: center; }
thead th { height: 24px; background: linear-gradient(#fafafa, #e9e9e9); }
thead .hot { background: linear-gradient(#fbdc9e, #f0bd59); color: #5b0a4e; }
.name div { display: flex; align-items: center; height: 18px; padding-left: 2px; }
.name span { margin-left: auto; width: 170px; }
.plus { width: 13px; height: 13px; border: 1px solid #aaa; background: linear-gradient(#111, #111) center/7px 1px no-repeat, linear-gradient(#111, #111) center/1px 7px no-repeat; }
.val { padding-left: 2px; }
.val .ic { display: inline-block; width: 12px; height: 12px; vertical-align: -2px; }
.chk { text-align: center; }
.chk input { appearance: none; display: block; width: 13px; height: 13px; border: 1px solid #222; background: #fff; margin: 0 auto; }
.blue .name { color: #00f; }
.grey .name, .grey .val { color: #808080; }
.sel th { background: #ffd28a; }
.sel .name { background: #0078d7; color: #fff; }
.sel .val { background: #d9e9f8; }

.status { flex: none; height: 22px; display: flex; gap: 2px; padding-top: 1px; font-family: "Liberation Serif", "Noto Sans CJK SC", serif; background: #f7f7f7; }
.status span { border: 1px solid #d4d4d4; background: linear-gradient(#fff, #f0f0f0); padding-left: 1px; line-height: 20px; height: 20px; white-space: nowrap; }
.s1 { width: 148px; } .s2 { width: 78px; } .s3 { width: 98px; } .s4 { width: 48px; } .s5 { flex: 1; } .s6 { width: 71px; }

.taskbar { flex: none; height: 40px; background: #020c11; color: #fff; display: flex; }
.start { width: 48px; }
.start .ic { margin: auto; }
.cortana { width: 344px; background: #333; display: flex; align-items: center; padding: 0 13px 0 9px; gap: 5px; }
.ring { width: 22px; height: 22px; border: 3px solid #fff; border-radius: 50%; flex: none; }
.cortana input { flex: 1; min-width: 0; font-size: 14px; }
.cortana input::placeholder { color: #999; opacity: 1; }
.apps { display: flex; gap: 2px; padding-left: 1px; }
.apps button { width: 48px; display: flex; align-items: center; justify-content: center; background: linear-gradient(#76b9ed, #76b9ed) center bottom/0 2px no-repeat; }
.apps .ic { width: 22px; height: 22px; }
.apps .run { background-size: 40px 2px; }
.apps .act { background-color: #30393d; background-size: 48px 2px; }
.tray { margin-left: auto; display: flex; align-items: center; padding-right: 14px; }
.two { text-align: center; line-height: 17px; }
.trayicons { display: flex; align-items: center; gap: 8px; padding-left: 18px; }
.trayicons span { font-size: 14px; margin-right: 6px; }
.clock { width: 60px; margin: 0 20px 0 16px; }
.note { width: 26px; height: 26px; margin-top: 4px; }

.dialog { position: absolute; left: 741px; top: 95px; width: 521px; height: 570px; border: 1px solid #222; border-bottom-color: #0c2b3c; box-shadow: inset -1px -1px #57c9f2; background: linear-gradient(#9bb5d3, #b9d0e9 30px, #b9d0e9); display: flex; flex-direction: column; padding: 0 9px 6px 8px; }
.dialog h2 { margin: 0 0 0 -1px; height: 32px; flex: none; font-size: 12px; font-weight: normal; line-height: 36px; }
.dlg-body { flex: 1; min-height: 0; display: flex; flex-direction: column; background: #f3f3f3; border: 1px solid #fff; padding: 3px 1px 5px 3px; }
.dlg-tools { flex: none; height: 27px; display: flex; align-items: center; gap: 10px; padding: 0 3px; background: linear-gradient(#fff, #f1f1f1); }
.dlg-tools.second { height: 29px; background: none; color: #777; padding-bottom: 2px; }
.grip { width: 2px; height: 15px; background: repeating-linear-gradient(#aaa 0 2px, transparent 2px 4px); margin-right: -4px; flex: none; }
.dlg-tools .sep { height: 14px; margin: 0 -2px; }
.info { display: flex; align-items: center; gap: 2px; }
.info-box { width: 133px; height: 23px; border: 1px solid #777; display: flex; align-items: center; padding-right: 3px; background: #f4f4f4; }
.canvas { flex: 1; min-height: 0; border: 2px solid #f00; background: #000; }
.canvas svg { width: 100%; height: 100%; display: block; }
.cad { font: 300 20px "Liberation Serif", "Noto Sans CJK SC", serif; }
.small { font-size: 18px; }
.dlg-status { flex: none; height: 22px; display: flex; gap: 2px; background: #f5f5f5; padding-top: 1px; }
.dlg-status span { border: 1px solid #d4d4d4; background: linear-gradient(#fff, #f1f1f1); }
.pos { width: 148px; padding-left: 7px; font: 10px/19px "Liberation Mono", monospace; }
.rest { flex: 1; display: flex; align-items: flex-end; justify-content: flex-end; }
.rest svg { width: 12px; height: 12px; fill: #b5b5b5; }
.marks { position: absolute; left: 364px; top: 149px; width: 400px; height: 80px; pointer-events: none; }
</style>
